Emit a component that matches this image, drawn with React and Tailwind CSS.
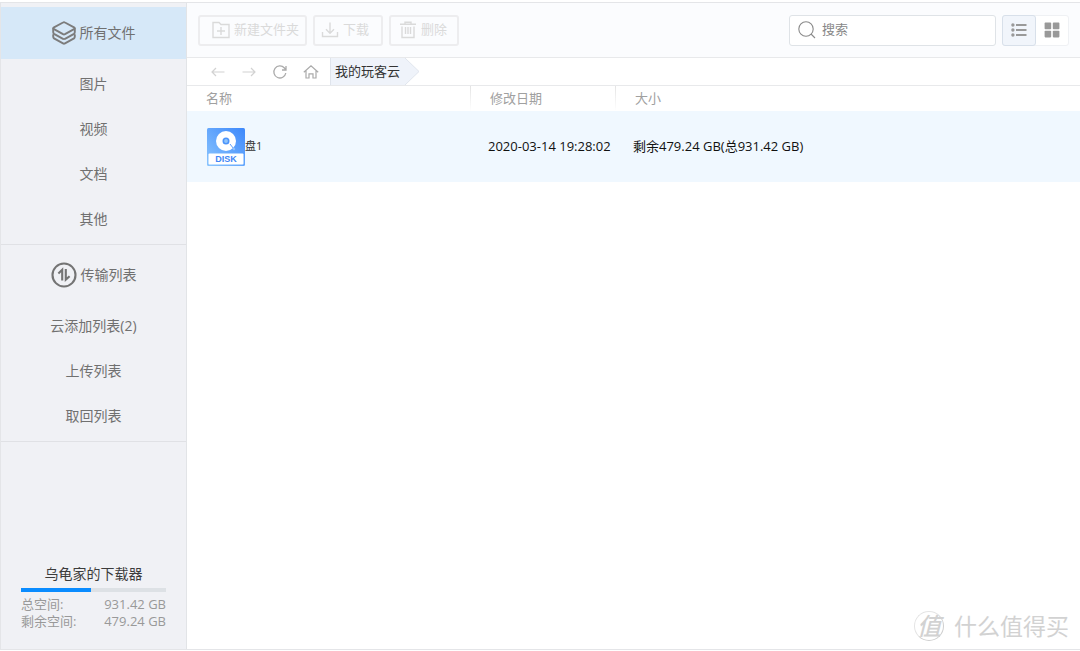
import React, { useState } from "react";

const fileTypes = ["图片", "视频", "文档", "其他"];
const transferLists = ["云添加列表(2)", "上传列表", "取回列表"];

const disks = [
  { name: "磁盘1", date: "2020-03-14 19:28:02", size: "剩余479.24 GB(总931.42 GB)" },
];

const storage = { name: "乌龟家的下载器", total: 931.42, free: 479.24 };

function LayersIcon() {
  return (
    <svg width="24" height="24" viewBox="0 0 24 24" fill="none" stroke="#7c7c7c" strokeWidth="1.9" strokeLinejoin="round" strokeLinecap="round">
      <path d="M11 1.5 Q12 .9 13 1.5 L22 6.3 Q23.3 7.2 22 8.1 L13 13.2 Q12 13.8 11 13.2 L2 8.1 Q.7 7.2 2 6.3 Z" />
      <path d="M1.2 7.5 V11 Q1.2 12.2 2 12.8 L11 17.8 Q12 18.4 13 17.8 L22 12.8 Q22.8 12.2 22.8 11 V7.5" />
      <path d="M1.2 14 V15.6 Q1.2 16.8 2 17.4 L11 22.4 Q12 23 13 22.4 L22 17.4 Q22.8 16.8 22.8 15.6 V14" />
    </svg>
  );
}

function TransferIcon() {
  return (
    <svg width="26" height="26" viewBox="0 0 26 26" fill="none" stroke="#747474" strokeWidth="2.1">
      <circle cx="13" cy="13" r="11.5" />
      <path d="M7.4 11.4 L11.2 7.8 V18.6" />
      <path d="M14.8 7 V17.6 L18.6 14.2" />
    </svg>
  );
}

function NewFolderIcon() {
  return (
    <svg width="18" height="18" viewBox="0 0 18 18" fill="none" stroke="currentColor" strokeWidth="1.4">
      <path d="M1 1.5 H7 L9 3.5 H17 V16.5 H1 Z M9 6 V14 M5 10 H13" />
    </svg>
  );
}

function DownloadIcon() {
  return (
    <svg width="18" height="18" viewBox="0 0 18 18" fill="none" stroke="currentColor" strokeWidth="1.4">
      <path d="M9 1.5 V12 M5 8.2 L9 12.2 L13 8.2 M1.5 11 V15.5 H16.5 V11" />
    </svg>
  );
}

function TrashIcon() {
  return (
    <svg width="18" height="18" viewBox="0 0 18 18" fill="none" stroke="currentColor" strokeWidth="1.4">
      <path d="M1 3.2 H17 M6 3 V1.2 H12 V3 M3 5.5 V16.5 H15 V5.5 M6.5 6 V13 M9 6 V13 M11.5 6 V13" />
    </svg>
  );
}

function DiskIcon() {
  return (
    <svg className="relative shrink-0" width="38" height="38" viewBox="0 0 38 38">
      <defs>
        <linearGradient id="disk" x1="0" y1="1" x2="1" y2="0">
          <stop offset="0" stopColor="#8cc6fe" />
          <stop offset="1" stopColor="#3d88fb" />
        </linearGradient>
      </defs>
      <rect width="38" height="38" rx="1.5" fill="url(#disk)" />
      <rect x="1.5" y="25.5" width="35" height="11" rx="1" fill="#fff" />
      <circle cx="19" cy="13" r="10" fill="#fff" />
      <circle cx="19" cy="13" r="2.7" fill="#8fc4fb" stroke="#4c94fb" strokeWidth="1.6" />
      <path d="M23 16 L26.5 20.5" stroke="#5b9dfb" strokeWidth="1" />
      <circle cx="27" cy="21" r="1.2" fill="#8fc0fd" />
      <text x="19" y="34.4" textAnchor="middle" fontFamily="Liberation Sans, sans-serif" fontSize="9" fontWeight="700" fill="#3f86f5">DISK</text>
    </svg>
  );
}

function Sidebar() {
  const used = ((storage.total - storage.free) / storage.total) * 100;

  return (
    <aside className="w-[186px] shrink-0 flex flex-col bg-[#f0f1f5] border-r border-[#e2e4e7] text-sm text-[#707070]">
      <nav>
        <div className="pt-1 pb-[3px] border-b border-[#e0e1e5]">
          <a href="#all" className="h-[52px] flex items-center justify-center gap-1 bg-[#d6e8f8]">
            <LayersIcon />
            所有文件
          </a>
          <ul className="pt-0.5">
            {fileTypes.map((name) => (
              <li key={name}>
                <a href="#files" className="h-[45px] flex items-center justify-center">{name}</a>
              </li>
            ))}
          </ul>
        </div>
        <div className="pt-1 pb-[3px] border-b border-[#e0e1e5]">
          <a href="#transfer" className="h-[52px] flex items-center justify-center gap-1">
            <TransferIcon />
            传输列表
          </a>
          <ul className="pt-0.5">
            {transferLists.map((name) => (
              <li key={name}>
                <a href="#lists" className="h-[45px] flex items-center justify-center">{name}</a>
              </li>
            ))}
          </ul>
        </div>
      </nav>

      <div className="mt-auto px-5 pb-[19px] text-[13px] leading-[17px] text-[#999]">
        <h2 className="text-center text-sm leading-[20px] text-[#3c3c3c]">{storage.name}</h2>
        <div className="mt-1 mb-1 h-1 bg-[#dde1e5]">
          <div className="h-full bg-[#0a8cff]" style={{ width: `${used}%` }} />
        </div>
        <div className="flex justify-between">
          <span>总空间:</span>
          <span>{storage.total} GB</span>
        </div>
        <div className="flex justify-between">
          <span>剩余空间:</span>
          <span>{storage.free} GB</span>
        </div>
      </div>
    </aside>
  );
}

function Toolbar({ view, setView }) {
  const button = "h-[31px] flex items-center gap-1 border-2 border-[#ededef] rounded-[3px] text-[#dadada]";

  return (
    <div className="h-[55px] pl-[11px] pr-[11px] flex items-center gap-1.5 bg-[#fbfcfe] border-b border-[#e8e9eb]">
      <button disabled className={`${button} pl-3 pr-1.5`}>
        <NewFolderIcon />
        新建文件夹
      </button>
      <button disabled className={`${button} pl-1.5 pr-3`}>
        <DownloadIcon />
        下载
      </button>
      <button disabled className={`${button} pl-2 pr-2.5`}>
        <TrashIcon />
        删除
      </button>

      <label className="ml-auto w-[207px] h-[31px] px-2 flex items-center gap-1.5 bg-white border border-[#dfe3e7] rounded-[3px]">
        <svg width="18" height="18" viewBox="0 0 18 18" fill="none" stroke="#8a8a8a" strokeWidth="1.1" className="shrink-0">
          <circle cx="8" cy="8" r="7.2" />
          <path d="M13 13 L17 17" />
        </svg>
        <input
          type="text"
          aria-label="搜索"
          placeholder="搜索"
          className="min-w-0 flex-1 outline-none placeholder:text-[#888]"
        />
      </label>

      <div className="flex h-[31px] border border-[#eff1f4] rounded-[3px] bg-white">
        <button
          aria-label="列表"
          onClick={() => setView("list")}
          className={`-m-px w-[34px] flex items-center justify-center border rounded-[3px] ${view === "list" ? "bg-[#f1f5fb] border-[#d8e0ea]" : "border-transparent"}`}
        >
          <svg width="16" height="14" viewBox="0 0 16 14" fill="#999">
            <circle cx="1.9" cy="2" r="1.7" />
            <circle cx="1.9" cy="7" r="1.7" />
            <circle cx="1.9" cy="12" r="1.7" />
            <path d="M5 1 H15.5 V3 H5 Z M5 6 H15.5 V8 H5 Z M5 11 H15.5 V13 H5 Z" />
          </svg>
        </button>
        <button
          aria-label="网格"
          onClick={() => setView("grid")}
          className={`w-[33px] flex items-center justify-center rounded-[3px] ${view === "grid" ? "bg-[#f1f5fb]" : ""}`}
        >
          <svg width="16" height="16" viewBox="0 0 16 16" fill="#999">
            <rect x=".6" y=".6" width="6.6" height="6.6" rx=".8" />
            <rect x="8.8" y=".6" width="6.6" height="6.6" rx=".8" />
            <rect x=".6" y="8.8" width="6.6" height="6.6" rx=".8" />
            <rect x="8.8" y="8.8" width="6.6" height="6.6" rx=".8" />
          </svg>
        </button>
      </div>
    </div>
  );
}

function PathBar() {
  return (
    <div className="h-7 pl-[23px] flex items-center border-b border-[#e8e9eb] text-[#aaa]">
      <div className="flex gap-[15px]">
        <button disabled aria-label="后退" className="text-[#d2d2d2]">
          <svg width="16" height="16" viewBox="0 0 16 16" fill="none" stroke="currentColor" strokeWidth="1.2">
            <path d="M14.5 8 H2 M6 4 L2 8 L6 12" />
          </svg>
        </button>
        <button disabled aria-label="前进" className="text-[#d2d2d2]">
          <svg width="16" height="16" viewBox="0 0 16 16" fill="none" stroke="currentColor" strokeWidth="1.2">
            <path d="M1.5 8 H14 M10 4 L14 8 L10 12" />
          </svg>
        </button>
        <button aria-label="刷新">
          <svg width="16" height="16" viewBox="0 0 16 16" fill="none" stroke="currentColor" strokeWidth="1.3">
            <path d="M13.8 9 A6 6 0 1 1 12.4 4 L13.8 5.6 M14 2 V6 H10" />
          </svg>
        </button>
        <button aria-label="主页">
          <svg width="16" height="16" viewBox="0 0 16 16" fill="none" stroke="currentColor" strokeWidth="1.2">
            <path d="M.8 8.3 L8 1.8 L15.2 8.3 M3 6.8 V14 H6 V9.8 H10 V14 H13 V6.8" />
          </svg>
        </button>
      </div>
      <div className="ml-[11px] flex">
        <a href="#root" className="h-[27px] pl-1 flex items-center bg-[#eff3fa] border-l border-[#dfe4ec] text-[#333]">
          我的玩客云
        </a>
        <svg width="20" height="27" viewBox="0 0 20 27">
          <path d="M0 0 H5 L19 13.5 L5 27 H0 Z" fill="#eff3fa" />
          <path d="M5 0 L19 13.5 L5 27" fill="none" stroke="#e0e5ed" />
        </svg>
      </div>
    </div>
  );
}

function FileTable() {
  const divider = "bg-linear-to-b from-[#e4e4e4] to-white w-px";

  return (
    <table className="w-full table-fixed">
      <thead>
        <tr className="h-[25px] text-left text-[#a0a0a0]">
          <th className="w-[283px] p-0 pl-[19px] font-normal">名称</th>
          <th className="w-[145px] p-0 font-normal">
            <div className="flex h-[25px] items-center gap-[19px]">
              <span className={`${divider} h-full`} />
              修改日期
            </div>
          </th>
          <th className="p-0 font-normal">
            <div className="flex h-[25px] items-center gap-[19px]">
              <span className={`${divider} h-full`} />
              大小
            </div>
          </th>
        </tr>
      </thead>
      <tbody>
        {disks.map((disk) => (
          <tr key={disk.name} className="h-[71px] bg-[#f0f8ff] text-[#111]">
            <td className="p-0 pl-5">
              <div className="flex flex-row-reverse items-center justify-end">
                <span className="-ml-[11px] text-[11px] text-[#333]">{disk.name}</span>
                <DiskIcon />
              </div>
            </td>
            <td className="p-0 pl-[18px]">{disk.date}</td>
            <td className="p-0 pl-[18px]">{disk.size}</td>
          </tr>
        ))}
      </tbody>
    </table>
  );
}

function Watermark() {
  return (
    <div className="absolute right-[11px] bottom-2 flex items-center gap-2.5 text-[#d2d2d2]">
      <span className="size-[30px] flex items-center justify-center rounded-full border border-[#e4e4e4] border-r-[#cfcfcf] border-b-[#cfcfcf] text-2xl font-medium italic">
        值
      </span>
      <span className="text-[23px]">什么值得买</span>
    </div>
  );
}

function App() {
  const [view, setView] = useState("list");

  return (
    <div className="relative min-h-screen pt-0.5 pb-px flex bg-white font-['Open_Sans','Noto_Sans_CJK_SC',sans-serif] text-[13px]">
      <div className="flex-1 flex border border-r-0 border-[#e4e5e8]">
        <Sidebar />
        <main className="flex-1 min-w-0">
          <Toolbar view={view} setView={setView} />
          <PathBar />
          <FileTable />
        </main>
      </div>
      <Watermark />
    </div>
  );
}

export default App;
